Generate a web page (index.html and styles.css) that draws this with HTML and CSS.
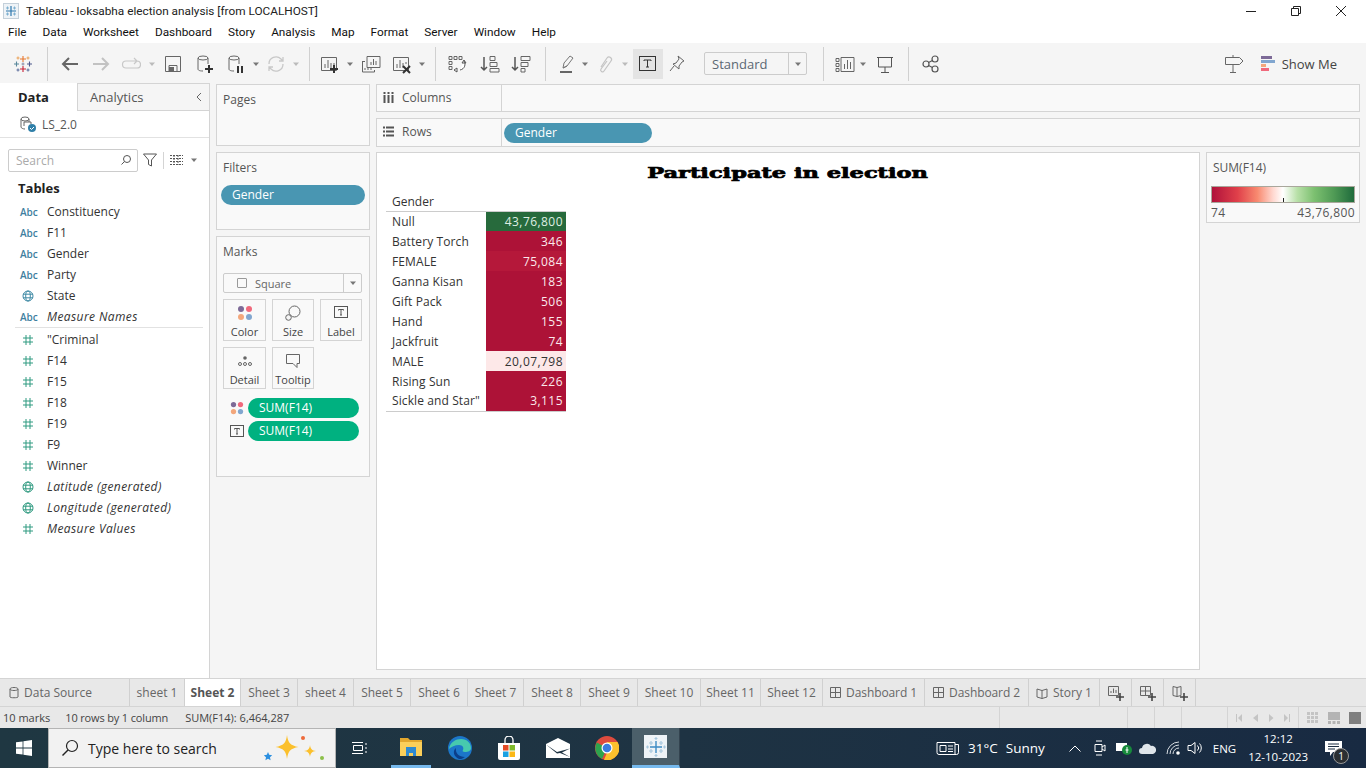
FILE: index.html
```html
<!DOCTYPE html>
<html lang="en">
<head>
<meta charset="utf-8">
<title>Tableau - loksabha election analysis</title>
<link rel="stylesheet" href="styles.css">
</head>
<body>
<svg class="defs" width="0" height="0" aria-hidden="true">
  <defs>
    <symbol id="hash" viewBox="0 0 12 12"><path d="M4 1v10M8 1v10M1 4h10M1 8h10" fill="none" stroke="#2f9a80" stroke-width="1"/></symbol>
    <symbol id="globe-b" viewBox="0 0 12 12"><g fill="none" stroke="#3f8aa5"><circle cx="6" cy="6" r="5"/><ellipse cx="6" cy="6" rx="2.3" ry="5"/><path d="M1 4.200h10M1 7.800h10"/></g></symbol>
    <symbol id="globe-g" viewBox="0 0 12 12"><g fill="none" stroke="#2f9a80"><circle cx="6" cy="6" r="5"/><ellipse cx="6" cy="6" rx="2.3" ry="5"/><path d="M1 4.200h10M1 7.800h10"/></g></symbol>
    <symbol id="tbox" viewBox="0 0 14 14"><rect x=".5" y="1.500" width="13" height="11" fill="none" stroke="#555"/><path d="M4.500 5.500v-1h5v1M7 4.500v5.500M6 10h2" fill="none" stroke="#555"/></symbol>
    <symbol id="dots" viewBox="0 0 16 16"><circle cx="4" cy="4" r="3" fill="#7d6a97"/><circle cx="12" cy="4" r="3" fill="#f0697c"/><circle cx="4" cy="12" r="3" fill="#f3a77c"/><circle cx="12" cy="12" r="3" fill="#81a6cf"/></symbol>
    <symbol id="caret" viewBox="0 0 8 8"><path d="M1 2.500h6L4 6z" fill="#777"/></symbol>
    <symbol id="caret-off" viewBox="0 0 8 8"><path d="M1 2.500h6L4 6z" fill="#bbb"/></symbol>
  </defs>
</svg>

<header class="titlebar">
  <svg class="app-ico" width="16" height="16" viewBox="0 0 16 16"><rect x=".5" y=".5" width="15" height="15" fill="#eef3f7" stroke="#c4d0da"/><path d="M8 3v10M3 8h10" stroke="#2f78ad" stroke-width="1.200" fill="none"/><path d="M4.500 3.500v3M3 5h3M11.500 3.500v3M10 5h3M4.500 9.500v3M3 11h3M11.500 9.500v3M10 11h3" stroke="#7fb0d0"/></svg>
  <span class="title-text">Tableau - loksabha election analysis [from LOCALHOST]</span>
  <div class="win-ctrls">
    <svg width="16" height="16" viewBox="0 0 16 16"><path d="M3 8.500h10" stroke="#222"/></svg>
    <svg width="16" height="16" viewBox="0 0 16 16"><path d="M3.500 5.500h7v7h-7zM5.500 5V3.500h7v7H11" fill="none" stroke="#222"/></svg>
    <svg width="16" height="16" viewBox="0 0 16 16"><path d="M3 3l10 10M13 3L3 13" stroke="#222" fill="none"/></svg>
  </div>
</header>

<nav class="menubar">
  <span>File</span><span>Data</span><span>Worksheet</span><span>Dashboard</span><span>Story</span><span>Analysis</span><span>Map</span><span>Format</span><span>Server</span><span>Window</span><span>Help</span>
</nav>

<div class="toolbar">
  <svg class="ti m13" viewBox="0 0 20 20"><g fill="none" stroke-width="1.100"><path d="M10 2v6M7 5h6" stroke="#e8762d"/><path d="M10 12v6M7 15h6" stroke="#c72035"/><path d="M3.500 7.500v5M1 10h5" stroke="#59879b"/><path d="M16.500 7.500v5M14 10h5" stroke="#4f5b8e"/><path d="M8.500 10h3M10 8.500v3" stroke="#8a8fa8"/><path d="M5 2.500v3M3.500 4h3M15 2.500v3M13.500 4h3" stroke="#eba45d"/><path d="M5 14.500v3M3.500 16h3M15 14.500v3M13.500 16h3" stroke="#5e6f9e"/></g></svg>
  <i class="sep m14"></i>
  <svg class="ti m12" viewBox="0 0 20 20"><path d="M18 10H3M9 4l-6 6 6 6" fill="none" stroke="#666" stroke-width="2"/></svg>
  <svg class="ti m11" viewBox="0 0 20 20"><path d="M2 10h15M11 4l6 6-6 6" fill="none" stroke="#c2c2c2" stroke-width="2"/></svg>
  <svg class="ti m10" viewBox="0 0 20 20"><path d="M15 7H5a3 3 0 0 0 0 7h11a3 3 0 0 0 0-7M13 4l3 3-3 3" fill="none" stroke="#c8c8c8" stroke-width="1.200"/></svg>
  <svg class="tc m7"><use href="#caret-off"/></svg>
  <svg class="ti m7" viewBox="0 0 20 20"><path d="M2.500 2.500h15v15h-15z M6 17.500v-6h8v6" fill="none" stroke="#666"/><rect x="6" y="13" width="5" height="4" fill="#666"/></svg>
  <svg class="ti m12" viewBox="0 0 20 20"><ellipse cx="8" cy="4" rx="5" ry="2" fill="none" stroke="#666"/><path d="M3 4v11c0 1 1 2 5 2M13 4v6" fill="none" stroke="#666"/><path d="M14 11v8M10 15h8" stroke="#333" stroke-width="2"/></svg>
  <svg class="ti m11" viewBox="0 0 20 20"><ellipse cx="8" cy="4" rx="5" ry="2" fill="none" stroke="#666"/><path d="M3 4v11c0 1 1 2 5 2M13 4v6" fill="none" stroke="#666"/><path d="M12 12v7M16 12v7" stroke="#333" stroke-width="2"/></svg>
  <svg class="tc m6"><use href="#caret"/></svg>
  <svg class="ti m6" viewBox="0 0 20 20"><path d="M3 10a7 7 0 0 1 12-5l2 2M17 10a7 7 0 0 1-12 5l-2-2M17 3v4h-4M3 17v-4h4" fill="none" stroke="#c8c8c8" stroke-width="1.300"/></svg>
  <svg class="tc m6"><use href="#caret-off"/></svg>
  <i class="sep m9"></i>
  <svg class="ti m10" viewBox="0 0 20 20"><path d="M1.500 3.500h15v13h-15zM5 14v-4M8 14V6M11 14V9M14 12V9" fill="none" stroke="#666"/><path d="M14 11v8M10 15h8" stroke="#333" stroke-width="2"/></svg>
  <svg class="tc m6"><use href="#caret"/></svg>
  <svg class="ti m7" viewBox="0 0 20 20"><path d="M6 2.500h13v11H6zM10 11V8M12.500 11V5M15 11V7M1 7.500h3M1.500 8v10h12v-2M4 14v2M7 14v2M10 14v2" fill="none" stroke="#666"/></svg>
  <svg class="ti m11" viewBox="0 0 20 20"><path d="M1.500 3.500h15v13h-15zM5 14v-4M8 14V6M11 14V9M14 10V8" fill="none" stroke="#666"/><path d="M11 12l7 7M18 12l-7 7" stroke="#333" stroke-width="2"/></svg>
  <svg class="tc m6"><use href="#caret"/></svg>
  <i class="sep m9"></i>
  <svg class="ti m11" viewBox="0 0 20 20"><path d="M2 2.500h3v3H2zM7 2.500h3v3H7zM12 2.500h3v3h-3zM2 7.500h3v3H2zM2 12.500h3v3H2z" fill="none" stroke="#666"/><path d="M17 7c2 3 1 8-4 9M7 16l3-2v4zM17 6l-2 3h4z" fill="#fff" stroke="#555"/></svg>
  <svg class="ti m13" viewBox="0 0 20 20"><path d="M4 3v13M1 13l3 3 3-3" fill="none" stroke="#555" stroke-width="1.500"/><path d="M10 2.500h5v4h-5zM10 8.500h7v4h-7zM10 14.500h9v3.500h-9z" fill="none" stroke="#666"/></svg>
  <svg class="ti m11" viewBox="0 0 20 20"><path d="M4 3v13M1 13l3 3 3-3" fill="none" stroke="#555" stroke-width="1.500"/><path d="M10 2.500h9v4h-9zM10 8.500h7v4h-7zM10 14.500h4v3.500h-4z" fill="none" stroke="#666"/></svg>
  <i class="sep m14"></i>
  <svg class="ti m12" viewBox="0 0 20 20"><path d="M5 14l1-5 6-7 3 2-6 8zM5 14l4-2" fill="none" stroke="#777"/><rect x="2" y="17" width="12" height="2" fill="#666"/></svg>
  <svg class="tc m3"><use href="#caret"/></svg>
  <svg class="ti m6" viewBox="0 0 20 20"><path d="M6 13l6-9a2.500 2.500 0 0 1 4 3l-7 10a1.500 1.500 0 0 1-3-2l6-8" fill="none" stroke="#c4c4c4" stroke-width="1.200"/></svg>
  <svg class="tc m6"><use href="#caret-off"/></svg>
  <span class="t-active"><svg width="18" height="16" viewBox="0 0 18 16"><rect x=".5" y=".5" width="16" height="14" fill="none" stroke="#333"/><path d="M5 5V4h7v1M8.500 4v7M7 11h3" fill="none" stroke="#333"/></svg></span>
  <svg class="ti m4" viewBox="0 0 20 20"><path d="M11 2l6 5-2 1-3 4 0 3-6-5 3-1 3-4zM7 12l-4 5" fill="none" stroke="#666"/></svg>
  <div class="fit-select m17"><span>Standard</span><b><svg width="8" height="8"><use href="#caret"/></svg></b></div>
  <i class="sep m16"></i>
  <svg class="ti m11" viewBox="0 0 20 20"><path d="M1 4.500h3v3H1zM1 9.500h3v3H1zM1 14.500h3v3H1zM6 3.500h13v14H6zM9.500 15V10M12.500 15V6M15.500 15V8" fill="none" stroke="#666"/></svg>
  <svg class="tc m4"><use href="#caret"/></svg>
  <svg class="ti m8" viewBox="0 0 20 20"><path d="M2 3.500h16M3.500 4v9h13V4M10 13v6M6 18.500h8" fill="none" stroke="#555"/></svg>
  <i class="sep m13"></i>
  <svg class="ti m12" viewBox="0 0 20 20"><g fill="none" stroke="#555" stroke-width="1.200"><circle cx="5" cy="10" r="3"/><circle cx="14" cy="5" r="3"/><circle cx="14" cy="15" r="3"/><path d="M7.500 8.500l4-2M7.500 11.500l4 2"/></g></svg>
  <svg class="ti signpost" viewBox="0 0 20 20"><path d="M1.500 3.500h14l3.500 3.500-3.500 3.500h-14zM9 1v2.500M9 10.500V18M6 18.500h6" fill="none" stroke="#666"/></svg>
  <div class="showme">
    <svg width="14" height="16" viewBox="0 0 14 16"><rect width="11" height="3" fill="#7d6a97"/><rect y="4" width="14" height="3" fill="#81a6cf"/><rect y="8" width="5" height="3" fill="#f3a77c"/><rect y="12" width="8" height="3" fill="#f0697c"/></svg>
    <span>Show Me</span>
  </div>
</div>

<main class="workspace">
  <aside class="data-pane">
    <div class="pane-tabs">
      <span class="pane-tab on">Data</span>
      <span class="pane-tab">Analytics<svg class="collapse" width="8" height="10" viewBox="0 0 8 10"><path d="M6 1L2 5l4 4" fill="none" stroke="#666"/></svg></span>
    </div>
    <div class="source">
      <svg width="18" height="18" viewBox="0 0 18 18"><g fill="none" stroke="#666"><ellipse cx="6" cy="4" rx="4" ry="2"/><path d="M2 4v8c0 1 2 2 4 2M10 4v3M5 7h7v2M5 7v4"/></g><circle cx="13" cy="13" r="4" fill="#2f7fa8"/><path d="M11 13l1.500 1.500L15 12" stroke="#fff" fill="none"/></svg>
      <span>LS_2.0</span>
    </div>
    <div class="search-row">
      <div class="search"><span>Search</span><svg width="12" height="12" viewBox="0 0 12 12"><circle cx="7" cy="5" r="3.500" fill="none" stroke="#555"/><path d="M4.500 7.500L1.500 10.500" stroke="#555"/></svg></div>
      <svg width="14" height="14" viewBox="0 0 14 14"><path d="M.5 1h13L8.500 7v6l-3-1.500V7z" fill="none" stroke="#555"/></svg>
      <i class="vline"></i>
      <svg width="13" height="10" viewBox="0 0 13 10"><path d="M0 .5h13M0 3.500h13M0 6.500h13M0 9.500h13M4 0v10M8 0v10" stroke="#555" stroke-dasharray="2 1" fill="none"/></svg>
      <svg class="list-caret" width="8" height="8"><use href="#caret"/></svg>
    </div>
    <h2 class="tables">Tables</h2>
    <ul class="fields">
      <li><span class="abc">Abc</span>Constituency</li>
      <li><span class="abc">Abc</span>F11</li>
      <li><span class="abc">Abc</span>Gender</li>
      <li><span class="abc">Abc</span>Party</li>
      <li><span class="f-ico"><svg width="12" height="12"><use href="#globe-b"/></svg></span>State</li>
      <li class="calc"><span class="abc">Abc</span>Measure Names</li>
    </ul>
    <ul class="fields measures">
      <li><span class="f-ico"><svg width="12" height="12"><use href="#hash"/></svg></span>"Criminal</li>
      <li><span class="f-ico"><svg width="12" height="12"><use href="#hash"/></svg></span>F14</li>
      <li><span class="f-ico"><svg width="12" height="12"><use href="#hash"/></svg></span>F15</li>
      <li><span class="f-ico"><svg width="12" height="12"><use href="#hash"/></svg></span>F18</li>
      <li><span class="f-ico"><svg width="12" height="12"><use href="#hash"/></svg></span>F19</li>
      <li><span class="f-ico"><svg width="12" height="12"><use href="#hash"/></svg></span>F9</li>
      <li><span class="f-ico"><svg width="12" height="12"><use href="#hash"/></svg></span>Winner</li>
      <li class="calc"><span class="f-ico"><svg width="12" height="12"><use href="#globe-g"/></svg></span>Latitude (generated)</li>
      <li class="calc"><span class="f-ico"><svg width="12" height="12"><use href="#globe-g"/></svg></span>Longitude (generated)</li>
      <li class="calc"><span class="f-ico"><svg width="12" height="12"><use href="#hash"/></svg></span>Measure Values</li>
    </ul>
  </aside>

  <section class="cards">
    <div class="card pages"><h3>Pages</h3></div>
    <div class="card filters"><h3>Filters</h3><div class="pill blue">Gender</div></div>
    <div class="card marks">
      <h3>Marks</h3>
      <div class="mark-type"><span class="sq"></span><span class="mt-label">Square</span><b><svg width="8" height="8"><use href="#caret"/></svg></b></div>
      <div class="mark-grid">
        <div class="mbtn"><svg width="16" height="16"><use href="#dots"/></svg><span>Color</span></div>
        <div class="mbtn"><svg width="16" height="16" viewBox="0 0 16 16"><circle cx="9.500" cy="6.500" r="5.500" fill="none" stroke="#666"/><circle cx="3.500" cy="12.500" r="2.800" fill="#f5f5f5" stroke="#666"/></svg><span>Size</span></div>
        <div class="mbtn"><svg width="14" height="14"><use href="#tbox"/></svg><span>Label</span></div>
        <div class="mbtn"><svg width="16" height="16" viewBox="0 0 16 16"><circle cx="8" cy="5" r="1.800" fill="#666"/><g fill="none" stroke="#666"><circle cx="3" cy="11" r="1.500"/><circle cx="8" cy="11" r="1.500"/><circle cx="13" cy="11" r="1.500"/></g></svg><span>Detail</span></div>
        <div class="mbtn"><svg width="16" height="16" viewBox="0 0 16 16"><path d="M1.500 1.500h13v9H12v4l-4-4H1.500z" fill="none" stroke="#666"/></svg><span>Tooltip</span></div>
      </div>
      <div class="enc"><svg width="14" height="14" viewBox="0 0 16 16"><use href="#dots"/></svg><div class="pill green">SUM(F14)</div></div>
      <div class="enc"><svg width="14" height="14"><use href="#tbox"/></svg><div class="pill green">SUM(F14)</div></div>
    </div>
  </section>

  <section class="stage">
    <div class="shelf cols"><div class="shelf-label"><svg width="11" height="11" viewBox="0 0 11 11"><path d="M1.500 3v8M5.500 3v8M9.500 3v8M1.500 0v2M5.500 0v2M9.500 0v2" stroke="#555" stroke-width="2" fill="none"/></svg><span>Columns</span></div></div>
    <div class="shelf rows"><div class="shelf-label"><svg width="11" height="11" viewBox="0 0 11 11"><path d="M3 1.500h8M3 5.500h8M3 9.500h8M0 1.500h2M0 5.500h2M0 9.500h2" stroke="#555" stroke-width="2" fill="none"/></svg><span>Rows</span></div><div class="pill blue row-pill">Gender</div></div>
    <div class="viz-row">
      <div class="viz">
        <div class="title-wrap"><h1 class="viz-title">Participate in election</h1></div>
        <table class="crosstab">
          <thead><tr><th>Gender</th><th></th></tr></thead>
          <tbody>
            <tr><td>Null</td><td class="v g">43,76,800</td></tr>
            <tr><td>Battery Torch</td><td class="v r">346</td></tr>
            <tr><td>FEMALE</td><td class="v f">75,084</td></tr>
            <tr><td>Ganna Kisan</td><td class="v r">183</td></tr>
            <tr><td>Gift Pack</td><td class="v r">506</td></tr>
            <tr><td>Hand</td><td class="v r">155</td></tr>
            <tr><td>Jackfruit</td><td class="v r">74</td></tr>
            <tr><td>MALE</td><td class="v m">20,07,798</td></tr>
            <tr><td>Rising Sun</td><td class="v r">226</td></tr>
            <tr><td>Sickle and Star"</td><td class="v r">3,115</td></tr>
          </tbody>
        </table>
      </div>
      <div class="legend">
        <div class="legend-title">SUM(F14)</div>
        <div class="ramp"><i class="tick"></i></div>
        <div class="legend-ends"><span>74</span><span>43,76,800</span></div>
      </div>
    </div>
  </section>
</main>

<div class="tabs">
  <span class="tab w130 ds"><svg width="10" height="13" viewBox="0 0 10 13"><path d="M1 3v8c0 1 8 1 8 0V3M1 3c0-2 8-2 8 0s-8 2-8 0" fill="none" stroke="#666"/></svg>Data Source</span>
  <span class="tab w55">sheet 1</span>
  <span class="tab w56 cur">Sheet 2</span>
  <span class="tab w57">Sheet 3</span>
  <span class="tab w56">sheet 4</span>
  <span class="tab w57">Sheet 5</span>
  <span class="tab w57">Sheet 6</span>
  <span class="tab w56">Sheet 7</span>
  <span class="tab w57">Sheet 8</span>
  <span class="tab w57">Sheet 9</span>
  <span class="tab w63">Sheet 10</span>
  <span class="tab w60">Sheet 11</span>
  <span class="tab w62">Sheet 12</span>
  <span class="tab w102"><svg width="11" height="11" viewBox="0 0 11 11"><path d="M.5.500h10v10H.5zM5.500.500v10M.5 5.500h10" fill="none" stroke="#666"/></svg>Dashboard 1</span>
  <span class="tab w104"><svg width="11" height="11" viewBox="0 0 11 11"><path d="M.5.500h10v10H.5zM5.500.500v10M.5 5.500h10" fill="none" stroke="#666"/></svg>Dashboard 2</span>
  <span class="tab w71"><svg width="12" height="12" viewBox="0 0 12 12"><path d="M1 2l5 1.500L11 2v8L6 11.500 1 10zM6 3.500v8" fill="none" stroke="#666"/></svg>Story 1</span>
  <span class="tab w32"><svg width="16" height="16" viewBox="0 0 16 16"><path d="M.5 1.500h10v9H.5zM3 8V6M5.500 8V3.500M8 8V5" fill="none" stroke="#666"/><path d="M12 8v8M8 12h8" stroke="#444" stroke-width="1.600"/></svg></span>
  <span class="tab w32"><svg width="16" height="16" viewBox="0 0 16 16"><path d="M.5 1.500h10v9H.5zM5.500 1.500v9M.5 6h10" fill="none" stroke="#666"/><path d="M12 8v8M8 12h8" stroke="#444" stroke-width="1.600"/></svg></span>
  <span class="tab w32"><svg width="16" height="16" viewBox="0 0 16 16"><path d="M1 1.500l4 1 4-1v9l-4 1-4-1zM5 2.500v9" fill="none" stroke="#666"/><path d="M12 8v8M8 12h8" stroke="#444" stroke-width="1.600"/></svg></span>
</div>

<div class="status">
  <span class="s-text s1">10 marks</span>
  <span class="s-text s2">10 rows by 1 column</span>
  <span class="s-text s3">SUM(F14): 6,464,287</span>
  <i class="s-div d1"></i><i class="s-div d2"></i><i class="s-div d3"></i><i class="s-div d4"></i>
  <i class="s-div d5"></i>
  <svg class="nav-ico" width="54" height="10" viewBox="0 0 54 10"><g fill="#c4c4c4"><path d="M0 1h1v8H0zM6 1v8L2 5zM22 1v8l-5-4zM33 1v8l4.500-4zM48 1v8l4-4zM53 1h1v8h-1z"/></g></svg>
  <i class="s-div d6"></i>
  <svg class="view-ico" width="12" height="12" viewBox="0 0 12 12"><path d="M0 0h3v3H0zM4 0h3v3H4zM8 0h3v3H8zM0 4h3v3H0zM4 4h3v3H4zM8 4h3v3H8zM0 8h3v3H0zM4 8h3v3H4zM8 8h3v3H8z" fill="#c4c4c4"/></svg>
  <svg class="view-ico v2" width="12" height="12" viewBox="0 0 12 12"><path d="M0 0h12v8H0zM0 9h3v3H0zM4.500 9h3v3h-3zM9 9h3v3H9z" fill="#b4b4b4"/></svg>
  <svg class="view-ico v3" width="12" height="12" viewBox="0 0 12 12"><rect width="12" height="12" fill="#7f7f7f"/></svg>
</div>

<footer class="taskbar">
  <span class="start"><svg width="16" height="16" viewBox="0 0 16 16"><path d="M0 2.300l6.600-.9v6.200H0zM7.400 1.300L16 0v7.600H7.400zM0 8.400h6.600v6.200L0 13.700zM7.400 8.400H16V16l-8.600-1.200z" fill="#fff"/></svg></span>
  <div class="tsearch">
    <svg width="18" height="18" viewBox="0 0 18 18"><circle cx="11" cy="7" r="5.500" fill="none" stroke="#222" stroke-width="1.200"/><path d="M7 11l-5.500 5.500" stroke="#222" stroke-width="1.400"/></svg>
    <span>Type here to search</span>
    <svg class="sparkle" width="61" height="26" viewBox="0 0 61 26"><path d="M23 0c1 8 3.500 10.500 11.500 12-8 1.500-10.500 4-11.500 12-1-8-3.500-10.500-11.500-12 8-1.500 10.500-4 11.500-12z" fill="#fbc02d"/><path d="M46 10c.5 4 2 5.500 6 6-4 .5-5.500 2-6 6-.5-4-2-5.500-6-6 4-.5 5.500-2 6-6z" fill="#fbc02d"/><path d="M4 17l1.200 2.800 3 .4-2.200 2 .6 3-2.600-1.500-2.600 1.500.6-3-2.200-2 3-.4z" fill="#2b8fe0"/><circle cx="39" cy="3" r="2" fill="#ee6a3a"/><circle cx="58" cy="23" r="2" fill="#8cc04a"/></svg>
  </div>
  <span class="tb-app a1"><svg width="16" height="16" viewBox="0 0 16 16"><path d="M0 2.500h11M0 13.500h11M1.500 5.500h9v5h-9zM14 3v2M14 7v2M14 11v2" fill="none" stroke="#fff"/></svg></span>
  <span class="tb-app a2 running"><svg width="22" height="20" viewBox="0 0 22 20"><path d="M0 1h8l2 2h12v3H0z" fill="#e2a72e"/><path d="M0 5h22v14H0z" fill="#fbcf5a"/><path d="M6 10h10v9h-3v-3H9v3H6z" fill="#2f8ad0"/></svg></span>
  <span class="tb-app a3"><svg width="24" height="24" viewBox="0 0 24 24"><circle cx="12" cy="12" r="12" fill="#1c76c9"/><path d="M1 13C2 6 8 3 13 3c6 0 10 4 10 9 0 3-3 4-6 4-2 0-3-1-2-2 1-2 0-5-4-5-4 0-8 2-10 4z" fill="#47c9ae"/><path d="M11 23c-5-2-7-8-3-11-1 5 3 9 9 9-2 1.500-4 2.300-6 2z" fill="#0b3f8a"/></svg></span>
  <span class="tb-app a4"><svg width="24" height="24" viewBox="0 0 24 24"><path d="M1 7h22v15a2 2 0 0 1-2 2H3a2 2 0 0 1-2-2z" fill="#fff"/><path d="M8 7V4a4 4 0 0 1 8 0v3" fill="none" stroke="#fff" stroke-width="1.300"/><rect x="6" y="9" width="5.500" height="5.500" fill="#e34a25"/><rect x="12.500" y="9" width="5.500" height="5.500" fill="#7fba2a"/><rect x="6" y="15.500" width="5.500" height="5.500" fill="#1ba1e2"/><rect x="12.500" y="15.500" width="5.500" height="5.500" fill="#fbb817"/></svg></span>
  <span class="tb-app a5"><svg width="24" height="20" viewBox="0 0 24 20"><path d="M0 6L12 0l12 6v14H0z" fill="#fff"/><path d="M0 6.500L11 14l13-3.500-8 4 8 4.500-10-4-3 .5z" fill="#1f3444"/></svg></span>
  <span class="tb-app a6"><svg width="24" height="24" viewBox="0 0 24 24"><circle cx="12" cy="12" r="12" fill="#dd4b3e"/><path d="M12 12L1.800 6.500A12 12 0 0 0 7 23z" fill="#2da44e"/><path d="M12 6h10.500A12 12 0 0 1 9 23.800L14 12z" fill="#fbc02d"/><circle cx="12" cy="12" r="5.500" fill="#fff"/><circle cx="12" cy="12" r="4.300" fill="#3a7de0"/></svg></span>
  <span class="tb-app a7 running"><span class="tab-ico"><svg width="20" height="20" viewBox="0 0 20 20"><path d="M10 4v12M4 10h12" stroke="#3d8bc4" stroke-width="1.400"/><path d="M5 4v4M3 6h4M15 4v4M13 6h4M5 12v4M3 14h4M15 12v4M13 14h4M10 0v3M8.500 1.500h3M10 17v3M8.500 18.500h3M1.500 8.500v3M0 10h3M18.500 8.500v3M17 10h3" stroke="#a8c8de" stroke-width="1.200"/></svg></span></span>
  <div class="tray">
    <svg class="news" width="24" height="15" viewBox="0 0 24 15"><path d="M1 1.500h18v12H3a2 2 0 0 1-2-2zM19 3.500h3.500v8a2 2 0 0 1-2 2H19M4 4.500h6v6H4zM12 5h5M12 8h5M12 10.500h5" fill="none" stroke="#fff"/></svg>
    <span class="weather w1">31°C</span><span class="weather w2">Sunny</span>
    <svg class="chev" width="12" height="7" viewBox="0 0 12 7"><path d="M.5 6.500L6 1l5.500 5.500" fill="none" stroke="#fff"/></svg>
    <svg class="tr-i t1" width="12" height="16" viewBox="0 0 12 16"><path d="M2 1h6M2 15h6M1 4.500h7v7H1zM8 7l3-2v6L8 9" fill="none" stroke="#fff"/></svg>
    <svg class="tr-i t2" width="16" height="14" viewBox="0 0 16 14"><rect y="2" width="11" height="8" fill="#fff"/><circle cx="11" cy="9" r="5" fill="#178a3c"/><path d="M11 6v6M9.500 9h3" stroke="#fff"/></svg>
    <svg class="tr-i t3" width="17" height="11" viewBox="0 0 17 11"><path d="M3 11a3 3 0 0 1 0-6 5 5 0 0 1 9-2 4 4 0 0 1 2 8z" fill="#dfe5ea"/></svg>
    <svg class="tr-i t4" width="14" height="14" viewBox="0 0 14 14"><path d="M1 13A12 12 0 0 1 13 1M4 13a9 9 0 0 1 9-9M7 13a6 6 0 0 1 6-6" fill="none" stroke="#d8dee3"/><circle cx="12" cy="12" r="1.800" fill="#fff"/></svg>
    <svg class="tr-i t5" width="16" height="14" viewBox="0 0 16 14"><path d="M1 4.500h3l4-3v11l-4-3H1zM10.500 4.500a3.500 3.500 0 0 1 0 5M12.500 2.500a6.500 6.500 0 0 1 0 9" fill="none" stroke="#fff"/></svg>
    <span class="eng">ENG</span>
    <div class="clock"><span>12:12</span><span>12-10-2023</span></div>
    <div class="notif"><svg width="17" height="15" viewBox="0 0 17 15"><path d="M0 0h17v11H8l-3 4v-4H0z" fill="#fff"/><path d="M3 3h11M3 5.500h11M3 8h7" stroke="#1b2d42"/></svg><span class="badge">1</span></div>
  </div>
</footer>
</body>
</html>
```
FILE: styles.css
```css
* { box-sizing: border-box; }
html, body { margin: 0; padding: 0; }
body {
  width: 1366px; height: 768px; overflow: hidden; position: relative;
  font-family: "Open Sans", "Noto Sans", sans-serif; font-size: 12px; color: #333; background: #fff;
  display: flex; flex-direction: column;
}
.defs { position: absolute; }
h1, h2, h3, ul { margin: 0; padding: 0; font-weight: normal; }
ul { list-style: none; }

.titlebar { height: 21px; flex: none; display: flex; align-items: center; padding-left: 3px; background: #fff; }
.app-ico { margin-right: 7px; }
.title-text { font-family: Roboto, sans-serif; font-size: 11.800px; color: #222; padding-top: 1px; }
.win-ctrls { margin-left: auto; display: flex; gap: 29px; padding-right: 17px; }

.menubar { height: 22px; flex: none; display: flex; align-items: center; gap: 16px; padding-left: 8px; font-family: Roboto, sans-serif; font-size: 11.800px; color: #111; background: #fff; }

.toolbar { height: 40px; flex: none; display: flex; align-items: center; padding-top: 1px; background: #f5f5f5; }
.ti { width: 20px; height: 20px; flex: none; }
.tc { width: 8px; height: 8px; flex: none; }
.sep { width: 1px; height: 34px; background: #d0d0d0; flex: none; }
.m3 { margin-left: 3px; } .m4 { margin-left: 4px; } .m6 { margin-left: 6px; } .m7 { margin-left: 7px; } .m8 { margin-left: 8px; } .m9 { margin-left: 9px; }
.m10 { margin-left: 10px; } .m11 { margin-left: 11px; } .m12 { margin-left: 12px; } .m13 { margin-left: 13px; } .m14 { margin-left: 14px; } .m16 { margin-left: 16px; } .m17 { margin-left: 17px; }
.t-active { width: 30px; height: 30px; margin-left: 4px; background: #e4e4e4; display: flex; align-items: center; justify-content: center; flex: none; }
.fit-select { width: 103px; height: 23px; flex: none; display: flex; border: 1px solid #ccc; border-radius: 2px; align-items: center; font-size: 13px; color: #5b6773; }
.fit-select span { flex: 1; padding-left: 7px; }
.fit-select b { width: 18px; height: 100%; border-left: 1px solid #ccc; display: flex; align-items: center; justify-content: center; }
.signpost { margin-left: auto; }
.showme { display: flex; align-items: center; gap: 7px; margin: 0 29px 0 17px; font-size: 13px; color: #444; }

.workspace { height: 595px; flex: none; display: flex; background: #f5f5f5; }
.data-pane { width: 210px; flex: none; background: #fff; border-right: 1px solid #d4d4d4; }
.pane-tabs { display: flex; height: 28px; background: #f5f5f5; }
.pane-tab { display: flex; align-items: center; font-size: 13px; color: #555; }
.pane-tab:first-child { width: 77px; padding-left: 18px; }
.pane-tab:last-child { flex: 1; padding-left: 12px; background: #f5f5f5; border: 1px solid #d4d4d4; border-right: 0; }
.pane-tab.on { background: #fff; font-weight: 700; color: #222; }
.collapse { margin-left: auto; margin-right: 6px; }
.source { height: 27px; display: flex; align-items: center; gap: 5px; padding-left: 19px; color: #555; border-bottom: 1px solid #e2e2e2; }
.search-row { display: flex; align-items: center; padding: 10px 0 0 8px; height: 34px; }
.search { width: 130px; height: 23px; border: 1px solid #ccc; border-radius: 2px; display: flex; align-items: center; justify-content: space-between; padding: 0 5px 0 7px; color: #aaa; margin-right: 5px; }
.vline { width: 1px; height: 17px; background: #d4d4d4; margin: 0 6px; }
.list-caret { margin-left: 7px; }
.tables { font-size: 13px; font-weight: 700; color: #222; padding: 7px 0 0 18px; height: 26px; }
.fields { padding-top: 3px; }
.fields li { height: 21px; display: flex; align-items: center; padding-left: 20px; color: #333; }
.fields .calc { font-style: italic; letter-spacing: .4px; }
.abc { width: 27px; flex: none; font-size: 10px; font-weight: 600; font-style: normal; letter-spacing: 0; color: #3f7f9f; }
.f-ico { width: 27px; flex: none; display: flex; padding-left: 2px; }
.measures { margin: 0 6px 0 15px; border-top: 1px solid #e2e2e2; padding-top: 1px; }
.measures li { padding-left: 5px; }

.cards { width: 166px; flex: none; display: flex; flex-direction: column; gap: 6px; padding: 1px 6px 0 6px; }
.card { border: 1px solid #d4d4d4; background: #f9f9f9; padding: 6px 4px 0 6px; }
.card h3 { font-size: 12px; color: #555; }
.pages { height: 62px; }
.filters { height: 78px; }
.filters h3 { margin-bottom: 9px; }
.marks { height: 241px; }
.marks h3 { margin-bottom: 13px; }
.pill { border-radius: 10px; height: 20px; display: flex; align-items: center; color: #fff; font-size: 12px; padding: 0 0 1px 11px; }
.pill.blue { background: #4996b2; }
.pill.green { background: #00b180; flex: 1; }
.filters .pill { margin: 0 0 0 -2px; }
.mark-type { width: 139px; height: 20px; border: 1px solid #ccc; border-radius: 2px; display: flex; align-items: center; margin-bottom: 6px; color: #666; font-size: 11px; }
.sq { width: 10px; height: 10px; border: 1px solid #999; margin-left: 13px; border-radius: 1px; }
.mt-label { margin-left: 8px; flex: 1; }
.mark-type b { width: 18px; height: 100%; border-left: 1px solid #ccc; display: flex; align-items: center; justify-content: center; }
.mark-grid { display: grid; grid-template-columns: 43px 42px 42px; column-gap: 6px; row-gap: 6px; grid-auto-rows: 42px; width: 139px; }
.mbtn { border: 1px solid #d4d4d4; display: flex; flex-direction: column; align-items: center; justify-content: space-between; padding: 5px 0 1px; font-size: 11px; color: #444; }
.enc { display: flex; align-items: center; gap: 4px; width: 129px; margin-left: 7px; height: 20px; margin-top: 3px; }
.mark-grid + .enc { margin-top: 9px; }

.stage { flex: 1; display: flex; flex-direction: column; padding: 1px 6px 0 0; }
.shelf { border: 1px solid #d4d4d4; background: #f9f9f9; display: flex; align-items: center; }
.shelf.cols { height: 28px; margin-bottom: 6px; }
.shelf.rows { height: 29px; margin-bottom: 5px; }
.shelf-label { width: 125px; height: 100%; border-right: 1px solid #d4d4d4; display: flex; align-items: center; gap: 8px; padding: 0 0 2px 6px; color: #555; font-size: 12px; }
.row-pill { width: 148px; margin-left: 2px; }
.viz-row { flex: 1; display: flex; gap: 6px; padding-bottom: 8px; }
.viz { width: 824px; background: #fff; border: 1px solid #d4d4d4; padding: 8px 0 0 9px; }
.title-wrap { height: 32px; width: 804px; display: flex; justify-content: center; padding-top: 1px; }
.viz-title {
  font-family: "DejaVu Serif", serif; font-weight: 700; font-size: 15px; line-height: 22px; color: #000; white-space: nowrap;
  -webkit-text-stroke: .7px #000; height: 22px; transform: scaleX(1.5);
}
.crosstab { border-collapse: collapse; width: 180px; table-layout: fixed; font-size: 12px; color: #333; }
.crosstab th { font-weight: normal; text-align: left; height: 18px; line-height: 16px; padding: 0 0 0 6px; border-bottom: 1px solid #ccc; }
.crosstab th + th { width: 80px; }
.crosstab td { height: 20px; padding: 0 0 0 6px; white-space: nowrap; line-height: 19px; letter-spacing: .1px; }
.crosstab tbody tr:last-child td { border-bottom: 1px solid #ccc; }
.crosstab .v { text-align: right; padding: 0 3px 0 0; color: #fbe9ec; letter-spacing: .45px; }
.crosstab .v.g { background: #276a3c; color: #dfeee3; }
.crosstab .v.r { background: #ad1237; }
.crosstab .v.f { background: #b5183a; }
.crosstab .v.m { background: #fde8e8; color: #333; }
.legend { flex: 1; height: 71px; border: 1px solid #d4d4d4; background: #f9f9f9; padding: 6px 4px 0 4px; }
.legend-title { padding-left: 2px; height: 27px; color: #555; }
.ramp { height: 17px; border: 1px solid #a9a79c; position: relative; background: linear-gradient(90deg, #b0123b 0%, #e0404a 18%, #f88a70 32%, #ffd8d0 43%, #fff 50%, #b8e0a8 60%, #7cc070 72%, #4f9a55 86%, #1f6b3c 100%); }
.tick { position: absolute; left: 71px; bottom: 0; width: 1px; height: 4px; background: #222; }
.legend-ends { display: flex; justify-content: space-between; padding-top: 1px; color: #555; letter-spacing: .4px; }

.tabs { height: 29px; flex: none; display: flex; background: #e8e8e8; border-top: 1px solid #d4d4d4; border-bottom: 1px solid #d4d4d4; }
.tab { display: flex; align-items: center; justify-content: center; gap: 5px; border-right: 1px solid #d0d0d0; color: #666; font-size: 12px; flex: none; }
.tab.ds { justify-content: flex-start; padding-left: 9px; }
.tab.cur { background: #fff; font-weight: 700; color: #555; }
.w130 { width: 130px; } .w55 { width: 55px; } .w56 { width: 56px; } .w57 { width: 57px; } .w60 { width: 60px; } .w62 { width: 62px; } .w63 { width: 63px; }
.w102 { width: 102px; letter-spacing: -.1px; } .w104 { width: 104px; letter-spacing: -.1px; } .w71 { width: 71px; } .w32 { width: 32px; }

.status { height: 21px; flex: none; display: flex; align-items: center; background: #e8e8e8; font-size: 11px; color: #444; }
.s1 { margin-left: 3px; } .s2 { margin-left: 15px; letter-spacing: -.15px; } .s3 { margin-left: 17px; }
.s-div { width: 1px; height: 21px; background: #d4d4d4; flex: none; }
.d1 { margin-left: auto; } .d2 { margin-left: 127px; } .d3 { margin-left: 26px; } .d4 { margin-left: 26px; } .d5 { margin-left: 45px; }
.nav-ico { margin-left: 8px; }
.d6 { margin-left: 8px; }
.view-ico { margin-left: 8px; }
.v2 { margin-left: 9px; } .v3 { margin-left: 9px; margin-right: 5px; }

.taskbar { height: 40px; flex: none; display: flex; align-items: center; background: linear-gradient(90deg, #1f3742 0%, #1e3343 50%, #182a42 100%); color: #fff; }
.start { width: 48px; display: flex; justify-content: center; flex: none; }
.tsearch { width: 288px; height: 40px; flex: none; background: #f2f2f2; border: 1px solid #b4b4b4; display: flex; align-items: center; padding-left: 12px; color: #222; font-size: 14px; }
.tsearch span { margin-left: 9px; }
.sparkle { margin-left: auto; margin-right: 10px; }
.tb-app { height: 40px; display: flex; align-items: center; justify-content: center; flex: none; }
.running { border-bottom: 3px solid #76b9ed; }
.a1 { width: 48px; } .a2 { width: 40px; margin-left: 7px; } .a3 { width: 58px; } .a4 { width: 39px; } .a5 { width: 60px; } .a6 { width: 38px; }
.a7 { width: 48px; margin-left: 6px; background: #4b5f6a; border-right: 1px solid #33434f; }
.tab-ico { width: 23px; height: 23px; background: #eef3f7; display: flex; align-items: center; justify-content: center; }
.tray { flex: 1; display: flex; align-items: center; font-size: 13.500px; }
.news { margin-left: 256px; }
.weather.w1 { margin-left: 8px; } .weather.w2 { margin-left: 8px; }
.chev { margin-left: 24px; }
.t1 { margin-left: 13px; } .t2 { margin-left: 10px; } .t3 { margin-left: 7px; } .t4 { margin-left: 10px; } .t5 { margin-left: 7px; }
.eng { margin-left: 10px; font-size: 11.500px; }
.clock { width: 72px; margin-left: 6px; display: flex; flex-direction: column; align-items: center; font-size: 11.500px; line-height: 18px; }
.notif { position: relative; margin-left: 11px; width: 17px; height: 15px; }
.notif svg { display: block; }
.badge { position: absolute; left: 8px; top: 7px; width: 16px; height: 16px; border-radius: 50%; background: #2b2f33; border: 1px solid #999; font-size: 10px; display: flex; align-items: center; justify-content: center; }
```
